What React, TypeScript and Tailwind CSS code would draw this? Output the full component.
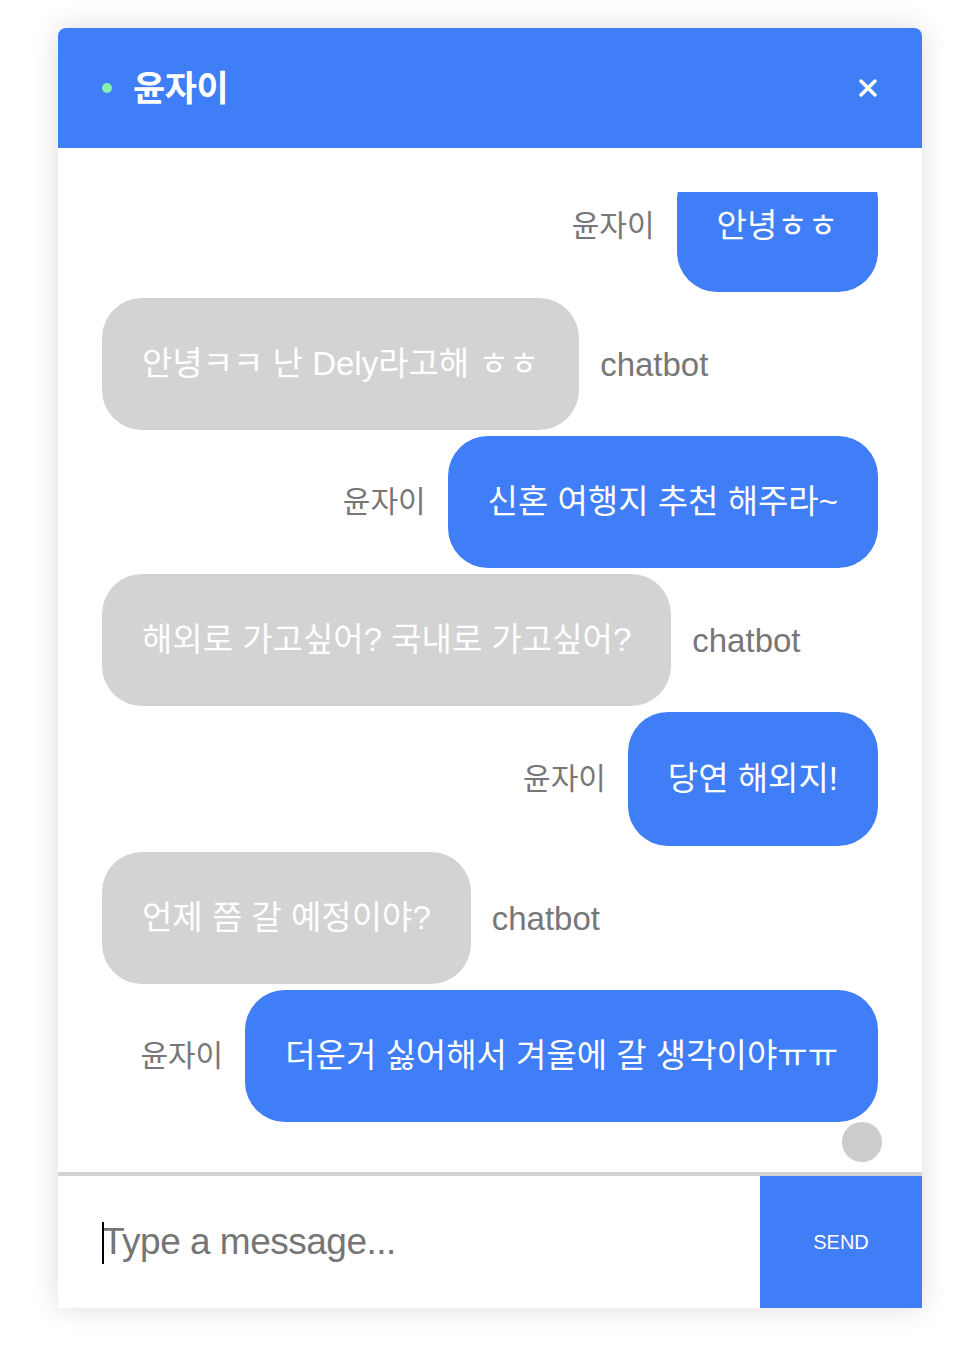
import React, { useState } from 'react';

type Msg = { id: number; from: 'me' | 'bot'; text: string; tall?: boolean };

const messages: Msg[] = [
  { id: 1, from: 'me', text: '안녕ㅎㅎ' },
  { id: 2, from: 'bot', text: '안녕ㅋㅋ 난 Dely라고해 ㅎㅎ' },
  { id: 3, from: 'me', text: '신혼 여행지 추천 해주라~' },
  { id: 4, from: 'bot', text: '해외로 가고싶어? 국내로 가고싶어?' },
  { id: 5, from: 'me', text: '당연 해외지!', tall: true },
  { id: 6, from: 'bot', text: '언제 쯤 갈 예정이야?' },
  { id: 7, from: 'me', text: '더운거 싫어해서 겨울에 갈 생각이야ㅠㅠ' },
];

const font = "font-['Liberation_Sans','Noto_Sans_CJK_KR',sans-serif]";

const App: React.FC = () => {
  const [text, setText] = useState('');

  return (
    <div className={`min-h-screen bg-white pt-[28px] px-[58px] ${font}`}>
      <div className="w-[864px] rounded-t-lg bg-white shadow-[0_0_28px_rgba(0,0,0,0.14)] flex flex-col">
        {/* header */}
        <div className="h-[120px] bg-[#3f7ef7] rounded-t-lg px-[44px] flex items-center justify-between">
          <div className="flex items-center gap-[21px]">
            <span className="w-[10px] h-[10px] rounded-full bg-[#86efac]" />
            <h1 className="text-white font-bold text-[35px] leading-none tracking-[-0.5px]">윤자이</h1>
          </div>
          <button className="w-[20px] h-[20px] flex items-center justify-center">
            <svg width="18" height="18" viewBox="0 0 18 18">
              <path d="M2 2 L16 16 M16 2 L2 16" stroke="white" strokeWidth="3.5" strokeLinecap="round" />
            </svg>
          </button>
        </div>

        {/* messages */}
        <div className="h-[1024px] pl-[44px] pr-[40px] pt-[44px] pb-[10px] flex flex-col">
          <div className="flex-1 overflow-hidden pr-[4px]">
            <div className="-mt-[32px] flex flex-col gap-[6px]">
              {messages.map((m) =>
                m.from === 'me' ? (
                  <div key={m.id} className="flex items-center justify-end gap-[22px]">
                    <span className="text-[#777777] text-[30px] leading-none">윤자이</span>
                    <div
                      className={`bg-[#3f7ef7] text-white text-[33px] leading-[52px] px-[40px] rounded-[40px] whitespace-nowrap ${
                        m.tall ? 'py-[41px]' : 'py-[40px]'
                      }`}
                    >
                      {m.text}
                    </div>
                  </div>
                ) : (
                  <div key={m.id} className="flex items-center justify-start gap-[21px]">
                    <div className="bg-[#d3d3d3] text-white text-[33px] leading-[52px] px-[40px] py-[40px] rounded-[40px] whitespace-nowrap">
                      {m.text}
                    </div>
                    <span className="text-[#777777] text-[33px] leading-none">chatbot</span>
                  </div>
                )
              )}
              <div className="flex justify-end -mr-[4px] -mt-[6px]">
                <span className="w-[40px] h-[40px] rounded-full bg-[#cccccc]" />
              </div>
            </div>
          </div>
        </div>

        {/* input */}
        <div className="border-t-4 border-[#d3d3d3] h-[136px] flex">
          <div className="relative flex-1 flex items-center pl-[44px]">
            <span className="absolute left-[44px] top-[46px] w-[2px] h-[42px] bg-black pointer-events-none" />
            <input
              value={text}
              onChange={(e) => setText(e.target.value)}
              placeholder="Type a message..."
              className="w-full outline-none text-[37px] text-[#333] placeholder:text-[#757575] bg-transparent tracking-[-0.5px]"
            />
          </div>
          <button className="w-[162px] bg-[#3f7ef7] text-white text-[20px]">SEND</button>
        </div>
      </div>
    </div>
  );
};

export default App;
